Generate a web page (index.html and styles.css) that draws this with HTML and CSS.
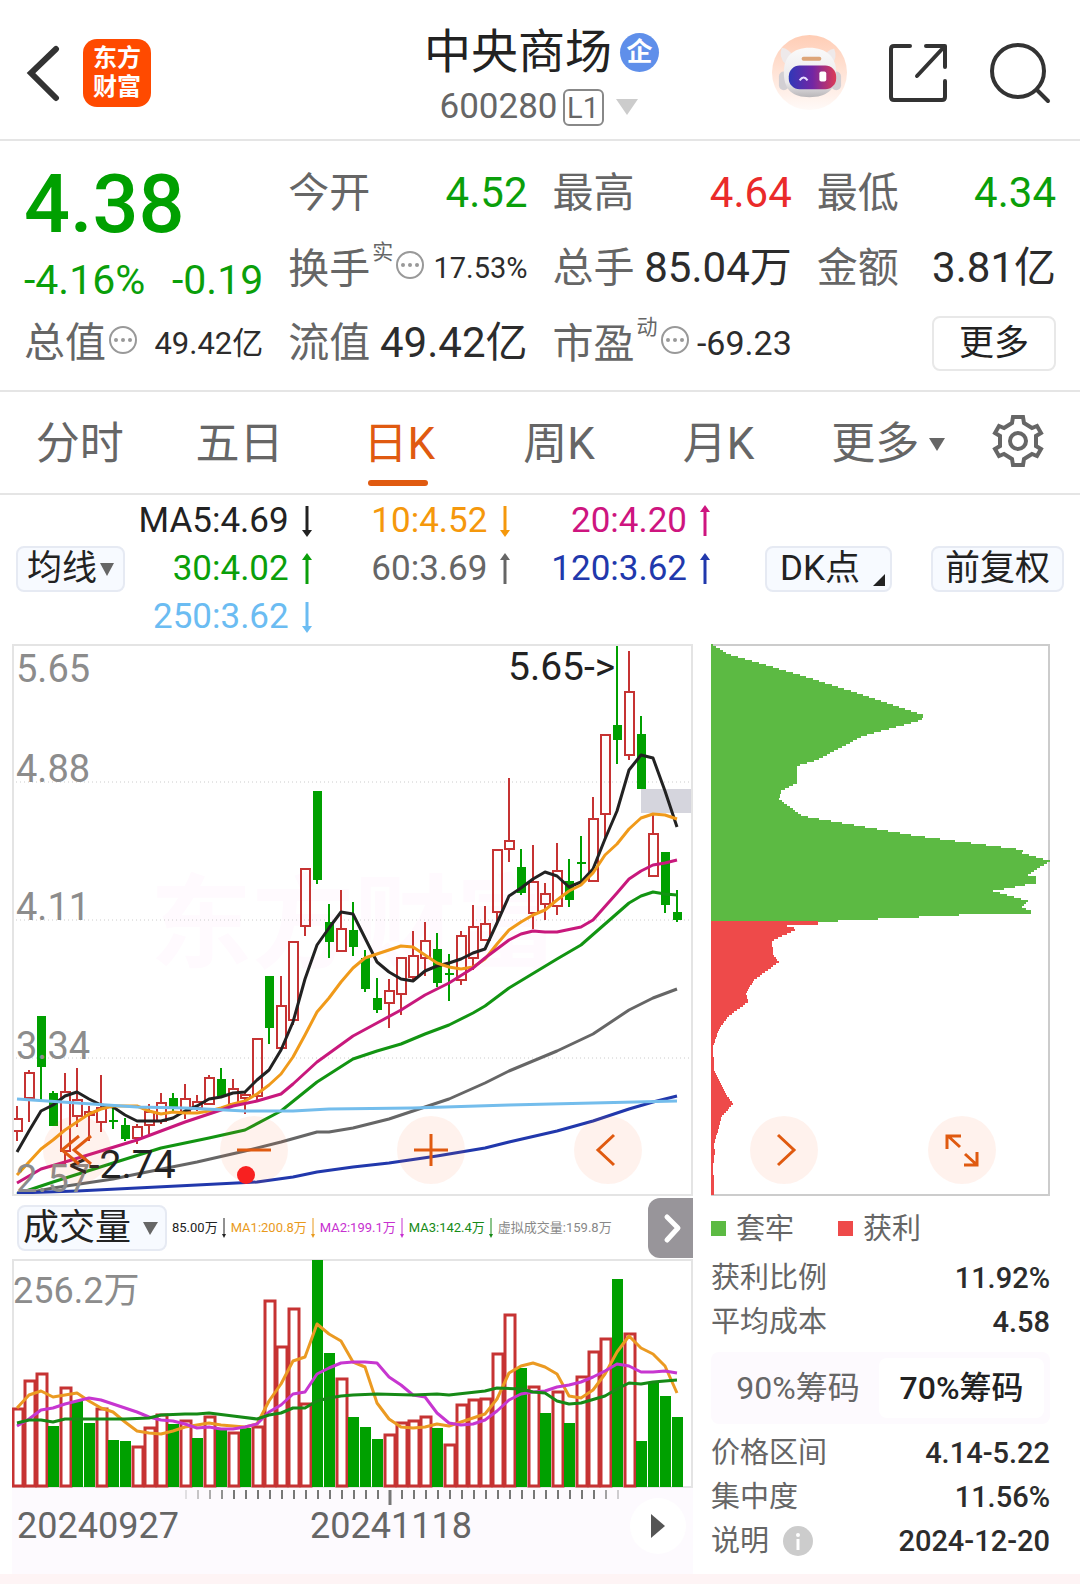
FILE: index.html
```html
<!DOCTYPE html>
<html lang="zh-CN">
<head>
<meta charset="utf-8">
<meta name="viewport" content="width=device-width, initial-scale=1">
<title>中央商场 600280</title>
<link rel="stylesheet" href="styles.css">
</head>
<body>
<header class="topbar">
  <div class="topbar-side">
    <button class="icon-btn" aria-label="返回"><svg width="34" height="58" viewBox="0 0 34 58"><path d="M30 5 5 29l25 25" fill="none" stroke="#333" stroke-width="6" stroke-linecap="round"/></svg></button>
    <div class="logo"><span>东方</span><span>财富</span></div>
  </div>
  <div class="title">
    <h1>中央商场 <span class="badge">企</span></h1>
    <button class="code">600280<span class="level">L1</span><svg width="22" height="16" viewBox="0 0 22 16"><path d="M0 0h22L11 16z" fill="#ccc"/></svg></button>
  </div>
  <div class="topbar-side end">
    <button class="icon-btn" aria-label="智能助手"><svg width="75" height="77" viewBox="0 0 76 78">
      <defs>
        <linearGradient id="halo" x1="0" y1="0" x2="0" y2="1"><stop offset="0" stop-color="#ffcdb5"/><stop offset="1" stop-color="#fffaf8"/></linearGradient>
        <linearGradient id="shell" x1="0" y1="0" x2="0" y2="1"><stop offset="0" stop-color="#fafafa"/><stop offset=".7" stop-color="#eae8ea"/><stop offset="1" stop-color="#b9b6b9"/></linearGradient>
        <linearGradient id="visor"><stop offset="0" stop-color="#2f38b8"/><stop offset=".5" stop-color="#7226a4"/><stop offset="1" stop-color="#dd3a55"/></linearGradient>
      </defs>
      <circle cx="38" cy="39" r="38" fill="url(#halo)"/>
      <path d="M10 14q7 1 11 8l-7 9q-8-8-4-17zM63 15q-7 1-10 8l7 9q7-8 3-17z" fill="#eee9ea"/>
      <rect x="7" y="38" width="10" height="19" rx="5" fill="#d2cfd3"/><rect x="60" y="38" width="10" height="19" rx="5" fill="#d2cfd3"/>
      <path d="M38 14c17 0 27 9 27 25 0 18-10 25-27 25S12 57 12 39c0-16 9-25 26-25z" fill="url(#shell)"/>
      <rect x="30" y="23" width="20" height="4" rx="2" fill="#dda578"/>
      <rect x="17" y="32" width="48" height="24" rx="11" fill="url(#visor)"/>
      <path d="M28 47q4-6 8 0" fill="none" stroke="#e8dcff" stroke-width="2"/><rect x="48" y="38" width="7" height="10" rx="2" fill="#fff"/>
    </svg></button>
    <button class="icon-btn" aria-label="分享"><svg width="60" height="60" viewBox="0 0 60 60" fill="none" stroke="#333" stroke-width="4" stroke-linecap="round" stroke-linejoin="round"><path d="M22 3H6Q3 3 3 6v48q0 3 3 3h48q3 0 3-3V38M38 3h19v21M56 4 29 33"/></svg></button>
    <button class="icon-btn" aria-label="搜索"><svg width="62" height="62" viewBox="0 0 62 62" fill="none" stroke="#333" stroke-width="4" stroke-linecap="round"><circle cx="29" cy="29" r="26"/><path d="m48 48 11 11"/></svg></button>
  </div>
</header>

<section class="quote">
  <div class="quote-col">
    <div class="price">4.38</div>
    <div class="change"><span>-4.16%</span><span>-0.19</span></div>
    <div class="cell"><span class="label">总值</span><svg class="more-dot" viewBox="0 0 30 30"><use href="#dots"/></svg><span class="value small">49.42亿</span></div>
  </div>
  <div class="quote-col">
    <div class="cell"><span class="label">今开</span><span class="value down">4.52</span></div>
    <div class="cell"><span class="label">换手<sup>实</sup></span><svg class="more-dot" viewBox="0 0 30 30"><use href="#dots"/></svg><span class="value tiny">17.53%</span></div>
    <div class="cell"><span class="label">流值</span><span class="value">49.42亿</span></div>
  </div>
  <div class="quote-col">
    <div class="cell"><span class="label">最高</span><span class="value up">4.64</span></div>
    <div class="cell"><span class="label">总手</span><span class="value">85.04万</span></div>
    <div class="cell"><span class="label">市盈<sup>动</sup></span><svg class="more-dot" viewBox="0 0 30 30"><use href="#dots"/></svg><span class="value medium">-69.23</span></div>
  </div>
  <div class="quote-col">
    <div class="cell"><span class="label">最低</span><span class="value down">4.34</span></div>
    <div class="cell"><span class="label">金额</span><span class="value">3.81亿</span></div>
    <div class="cell"><button class="more">更多</button></div>
  </div>
</section>

<nav class="tabs">
  <button>分时</button>
  <button>五日</button>
  <button class="active">日K</button>
  <button>周K</button>
  <button>月K</button>
  <button class="other">更多<svg width="16" height="13" viewBox="0 0 16 13"><path d="M0 0h16L8 13z" fill="#666"/></svg></button>
  <button class="gear" aria-label="设置"><svg width="56" height="56" viewBox="-28 -28 56 56" fill="none" stroke="#666" stroke-width="4"><path d="M-5-24H5L6-18 14-13 19-15 23-8 18-5V5L23 8 19 15 14 13 6 18 5 24H-5L-6 18-14 13-19 15-23 8-18 5V-5L-23-8-19-15-14-13-6-18Z"/><circle r="8"/></svg></button>
</nav>

<section class="averages">
  <button class="chip">均线<svg width="14" height="13" viewBox="0 0 14 13"><path d="M0 0h14L7 13z" fill="#666"/></svg></button>
  <div class="ma-grid">
    <span class="c5">MA5:4.69<svg class="arrow"><use href="#fall"/></svg></span>
    <span class="c10">10:4.52<svg class="arrow"><use href="#fall"/></svg></span>
    <span class="c20">20:4.20<svg class="arrow"><use href="#rise"/></svg></span>
    <span class="c30">30:4.02<svg class="arrow"><use href="#rise"/></svg></span>
    <span class="c60">60:3.69<svg class="arrow"><use href="#rise"/></svg></span>
    <span class="c120">120:3.62<svg class="arrow"><use href="#rise"/></svg></span>
    <span class="c250">250:3.62<svg class="arrow"><use href="#fall"/></svg></span>
  </div>
  <button class="chip dk">DK点<svg width="12" height="12" viewBox="0 0 12 12"><path d="M12 0v12H0z" fill="#222"/></svg></button>
  <button class="chip">前复权</button>
</section>

<main class="board">
  <section class="left">
    <div class="chart-wrap">
      <svg class="chart" id="kline" viewBox="0 0 681 552" role="img" aria-label="日K线图">
        <text class="watermark" x="138" y="316">东方财富</text>
        <g class="grid"><path d="M0 138h681M0 276h681M0 414h681"/></g>
        <rect x="629" y="145" width="52" height="24" fill="#d5d5dd"/>
        <g id="candles"></g>
        <g id="mas"></g>
        <g class="scale"><text x="4" y="38">5.65</text><text x="4" y="138">4.88</text><text x="4" y="276">4.11</text><text x="4" y="415">3.34</text><text x="4" y="548">2.57</text></g>
        <g class="marks"><text x="496" y="36">5.65-&gt;</text><text x="57" y="534">&lt;-2.74</text></g>
        <rect x="1" y="1" width="679" height="550" fill="none" stroke="#e4e4e4" stroke-width="2"/>
      </svg>
      <div class="controls">
        <button aria-label="最早"><svg viewBox="0 0 68 68"><path d="M36 20 19 34l17 14M48 20 31 34l17 14"/></svg></button>
        <button aria-label="缩小"><svg viewBox="0 0 68 68"><path d="M17 34h34"/></svg><i class="dot"></i></button>
        <button aria-label="放大"><svg viewBox="0 0 68 68"><path d="M17 34h34M34 18v32"/></svg></button>
        <button aria-label="左移"><svg viewBox="0 0 68 68"><path d="M40 19 24 34l16 15"/></svg></button>
      </div>
    </div>
    <div class="vol-head">
      <button class="chip">成交量<svg width="15" height="13" viewBox="0 0 15 13"><path d="M0 0h15L7 13z" fill="#666"/></svg></button>
      <p class="vol-values">
        <span class="c5">85.00万<svg><use href="#fall-s"/></svg></span>
        <span class="v1">MA1:200.8万<svg><use href="#fall-s"/></svg></span>
        <span class="v2">MA2:199.1万<svg><use href="#fall-s"/></svg></span>
        <span class="v3">MA3:142.4万<svg><use href="#fall-s"/></svg></span>
        <span class="v4">虚拟成交量:159.8万</span>
      </p>
      <button class="next" aria-label="下一个指标"><svg width="45" height="60" viewBox="0 0 45 60"><path d="m19 19 11 11-11 12" fill="none" stroke="#fff" stroke-width="5" stroke-linecap="round" stroke-linejoin="round"/></svg></button>
    </div>
    <svg class="chart" id="volume" viewBox="0 0 681 229" role="img" aria-label="成交量图">
      <g class="scale"><text x="1" y="44">256.2万</text></g>
      <rect x="1" y="1" width="679" height="227" fill="none" stroke="#e4e4e4" stroke-width="2"/>
      <g id="bars"></g>
      <g id="vmas"></g>
    </svg>
    <div class="axis">
      <svg class="ticks" id="ticks" viewBox="0 0 681 18"></svg>
      <div class="dates"><time>20240927</time><time>20241118</time><button aria-label="播放"><svg width="14" height="24" viewBox="0 0 14 24"><path d="M0 0l14 12L0 24z" fill="#555"/></svg></button></div>
    </div>
  </section>

  <aside class="right">
    <div class="chart-wrap">
      <svg class="chart" viewBox="0 0 339 552" role="img" aria-label="筹码分布">
        <path d="M0 1H338V551H0" fill="none" stroke="#ccc" stroke-width="2"/>
        <path id="trapped" fill="#5cba43"/>
        <path id="profit" fill="#ee4a4a"/>
      </svg>
      <div class="controls">
        <button aria-label="右移"><svg viewBox="0 0 68 68"><path d="m28 19 16 15-16 15"/></svg></button>
        <button aria-label="全屏"><svg viewBox="0 0 68 68"><path d="M19 33V20h14M20 20l12 11M37 38l12 11M36 49h13V36"/></svg></button>
      </div>
    </div>
    <div class="legend"><span class="trapped">套牢</span><span class="profit">获利</span></div>
    <dl class="stats">
      <div><dt>获利比例</dt><dd>11.92%</dd></div>
      <div><dt>平均成本</dt><dd>4.58</dd></div>
    </dl>
    <div class="switch"><button>90%筹码</button><button class="active">70%筹码</button></div>
    <dl class="stats">
      <div><dt>价格区间</dt><dd>4.14-5.22</dd></div>
      <div><dt>集中度</dt><dd>11.56%</dd></div>
      <div><dt>说明<svg width="30" height="30" viewBox="0 0 30 30"><circle cx="15" cy="15" r="15" fill="#ccc"/><circle cx="15" cy="9" r="2" fill="#fff"/><path d="M15 13v11" stroke="#fff" stroke-width="3"/></svg></dt><dd>2024-12-20</dd></div>
    </dl>
  </aside>
</main>
<div class="strip"></div>

<svg width="0" height="0" class="symbols">
  <symbol id="dots" viewBox="0 0 30 30"><circle cx="15" cy="15" r="13" fill="none" stroke="#999" stroke-width="2"/><circle cx="8" cy="15" r="2" fill="#999"/><circle cx="15" cy="15" r="2" fill="#999"/><circle cx="22" cy="15" r="2" fill="#999"/></symbol>
  <symbol id="fall" viewBox="0 0 12 32"><path d="M6 1v27" stroke="currentColor" stroke-width="3"/><path d="M1 25h10l-5 7z" fill="currentColor"/></symbol>
  <symbol id="rise" viewBox="0 0 12 32"><path d="M6 4v27" stroke="currentColor" stroke-width="3"/><path d="M1 7h10L6 0z" fill="currentColor"/></symbol>
  <symbol id="fall-s" viewBox="0 0 4 20"><path d="M2 0v18" stroke="currentColor"/><path d="M0 16h4l-2 4z" fill="currentColor"/></symbol>
</svg>
<script src="charts.js"></script>
</body>
</html>
```
FILE: styles.css
```css
* { box-sizing: border-box; }
body { margin: 0; background: #fff; color: #222; font-family: Roboto, "Noto Sans CJK SC", sans-serif; line-height: 1.2; }
button { font: inherit; color: inherit; background: none; border: 0; padding: 0; cursor: pointer; }
svg { display: block; flex: none; }
h1, p, dl, dd { margin: 0; font-weight: 400; }
.symbols { position: absolute; }

.topbar { display: flex; align-items: center; justify-content: space-between; height: 141px; padding: 6px 29px 0 26px; border-bottom: 2px solid #e5e5e5; }
.topbar-side { display: flex; align-items: center; gap: 23px; flex: 1; }
.topbar-side.end { justify-content: flex-end; gap: 41px; }
.logo { width: 68px; height: 68px; border-radius: 14px; background: #ff4a00; color: #fff; font-size: 24px; font-weight: 700; line-height: 29px; display: flex; flex-direction: column; align-items: center; justify-content: center; }
.title { display: flex; flex-direction: column; align-items: center; padding-top: 9px; }
.title h1 { display: flex; align-items: center; gap: 8px; padding-left: 6px; font-size: 47px; line-height: 60px; }
.badge { width: 39px; height: 39px; border-radius: 50%; background: #5f8fea; color: #fff; font-size: 26px; font-weight: 700; line-height: 39px; text-align: center; }
.code { display: flex; align-items: center; gap: 5px; font-size: 35px; line-height: 50px; color: #666; }
.code svg { margin-left: 7px; }
.level { width: 41px; height: 37px; border: 2px solid #888; border-radius: 6px; font-size: 29px; line-height: 34px; text-align: center; }

.quote { display: grid; grid-template-columns: repeat(4, 1fr); gap: 25px; padding: 15px 24px 9px; border-bottom: 2px solid #e5e5e5; }
.price { height: 98px; line-height: 98px; font-size: 81px; font-weight: 500; color: #00a000; }
.change { display: flex; justify-content: space-between; height: 52px; line-height: 52px; font-size: 41px; color: #0a9f0a; }
.cell { display: flex; align-items: center; height: 75px; }
.label { font-size: 41px; color: #666; white-space: nowrap; }
.label sup { margin-left: 2px; font-size: 21px; line-height: 21px; vertical-align: 24px; }
.more-dot { width: 30px; height: 30px; margin: -7px 0 0 2px; }
.value { margin-left: auto; font-size: 42px; white-space: nowrap; color: #2c2c2c; }
.value.medium { font-size: 34px; }
.value.small { font-size: 31px; }
.value.tiny { font-size: 29px; }
.value.down { color: #0a9f0a; }
.value.up { color: #ea2a2a; }
.more { width: 124px; height: 55px; margin-left: auto; border: 2px solid #e8e8e8; border-radius: 8px; font-size: 35px; }

.tabs { display: grid; grid-template-columns: repeat(6, 4fr) 3fr; height: 103px; padding-right: 2px; border-bottom: 2px solid #e5e5e5; }
.tabs button { position: relative; display: flex; align-items: center; justify-content: center; gap: 10px; padding-top: 3px; font-size: 44px; color: #666; }
.tabs .other { padding-left: 20px; }
.tabs .gear { padding: 0 0 3px; }
.tabs .active { color: #e05a10; }
.tabs .active::after { content: ""; position: absolute; bottom: 7px; left: 50%; width: 60px; height: 6px; margin-left: -31px; border-radius: 3px; background: #e05a10; }

.averages { display: flex; align-items: center; padding: 2px 16px 3px; }
.chip { display: flex; align-items: center; gap: 3px; height: 46px; padding: 0 9px; border: 2px solid #e6eaf3; border-radius: 8px; background: #f7faff; font-size: 35px; white-space: nowrap; }
.averages .chip:last-child { padding: 0 12px; margin-left: 39px; }
.averages .dk { gap: 13px; padding: 0 5px 0 13px; }
.dk svg { margin-top: 22px; }
.ma-grid { flex: 1; display: grid; grid-template-columns: 188fr 199fr 200fr; margin-right: 54px; font-size: 35px; line-height: 48px; }
.ma-grid span { display: flex; align-items: center; justify-content: flex-end; gap: 12px; }
.arrow { width: 12px; height: 32px; }
.c5 { color: #222; } .c10 { color: #f5980c; } .c20 { color: #ce157f; } .c30 { color: #0a9f0a; }
.c60 { color: #666; } .c120 { color: #2138ac; } .c250 { color: #6bbcf2; }

.board { display: grid; grid-template-columns: 681fr 339fr; gap: 18px; padding: 0 30px 0 12px; }
.chart-wrap { position: relative; }
.chart { width: 100%; height: auto; }
.watermark { font-size: 102px; font-weight: 700; fill: #fffafe; }
.grid { stroke: #ccc; stroke-dasharray: 1 3; }
.scale { font-size: 38px; fill: #8c8c8c; }
#volume .scale { font-size: 36px; }
.marks { font-size: 39px; fill: #222; }
.controls { position: absolute; bottom: 12px; left: 31px; right: 51px; display: flex; justify-content: space-between; }
.right .controls { left: 39px; right: 54px; }
.controls button { position: relative; width: 68px; height: 68px; border-radius: 50%; background: rgba(250, 110, 60, .09); }
.controls path { fill: none; stroke: #e05a10; stroke-width: 3; }
.dot { position: absolute; left: 17px; top: 50px; width: 18px; height: 18px; border-radius: 50%; background: #f82020; }

.vol-head { display: flex; align-items: center; height: 63px; padding-left: 5px; }
.vol-head .chip { width: 150px; padding: 2px 7px 0 4px; font-size: 36px; justify-content: space-between; }
.vol-values { display: flex; gap: 5px; margin-left: 5px; font-size: 13px; white-space: nowrap; }
.vol-values span { display: flex; align-items: center; gap: 4px; }
.vol-values svg { width: 4px; height: 20px; }
.v1 { color: #e99a1c; } .v2 { color: #c730d0; } .v3 { color: #168a16; } .v4 { color: #888; }
.next { margin-left: auto; border-radius: 12px 0 0 12px; background: #98959a; }
.axis { height: 86px; background: #fdfafe; }
.ticks { width: 100%; height: auto; }
.dates { display: grid; grid-template-columns: 293fr 320fr 63fr; align-items: center; padding-left: 5px; font-size: 36px; line-height: 40px; color: #666; }
.dates button { width: 56px; height: 56px; margin: -8px 0; border-radius: 50%; background: #fff; display: flex; align-items: center; justify-content: center; }

.legend { display: flex; gap: 44px; padding-top: 6px; height: 60px; align-items: center; font-size: 29px; color: #666; }
.legend span { display: flex; align-items: center; gap: 10px; }
.legend span::before { content: ""; width: 15px; height: 15px; background: #5cba43; }
.legend .profit::before { background: #ee4a4a; }
.stats div { display: flex; justify-content: space-between; align-items: center; height: 44px; font-size: 29px; }
.stats dt { display: flex; align-items: center; gap: 14px; color: #666; }
.stats dd { font-size: 29px; font-weight: 500; color: #2c2c2c; }
.switch { display: grid; grid-template-columns: 162fr 165fr; height: 72px; margin: 8px 0 7px; padding: 6px; border-radius: 8px; background: #fdfafe; font-size: 32px; color: #666; }
.switch button { border-radius: 8px; }
.switch .active { background: #fff; color: #222; font-weight: 500; }
.strip { height: 10px; background: #fef4f5; }
```
FILE: charts.js
```js
const STEP = 12, X0 = 5;
const px = i => X0 + STEP * i;
const RED = '#c63333', GREEN = '#00a000';

// One entry per day: direction, high, body top, body bottom, low.
const days = `r 462 475 487 497|r 426 429 454 478|g 372 372 423 456|g 447 449 482 482|r 429 448 507 522|r 424 456 472 483|r 462 468 471 497|r 431 464 478 488
g 464 476 478 485|g 474 481 495 497|r 480 483 494 500|r 460 468 481 490|r 449 459 477 480|g 449 454 463 467|r 440 455 468 475|r 451 458 464 467
r 431 434 460 461|g 424 435 452 454|r 435 445 460 460|r 448 451 454 470|r 395 395 452 457|g 332 332 384 400|r 332 362 404 404|r 298 298 376 381
r 225 225 282 292|g 147 147 236 240|g 260 278 298 314|r 246 285 307 307|g 258 286 303 312|g 306 314 345 348|g 334 354 366 369|r 335 347 359 384
r 314 314 350 371|r 287 312 333 337|r 278 297 314 332|g 289 305 339 343|g 310 329 331 357|r 287 292 336 341|r 261 283 314 326|r 262 280 296 296
r 206 206 268 277|r 134 197 205 218|g 205 223 249 251|r 201 238 269 285|r 239 250 260 276|r 199 227 262 271|g 215 237 256 263|g 192 218 220 238
r 153 175 237 237|r 91 91 170 194|g 0 81 96 120|r 7 48 111 116|g 72 90 145 145|r 171 190 232 232|g 208 208 261 269|g 246 268 276 278`
  .split(/[|\n]/).map(d => d.trim().split(' '));

document.getElementById('candles').innerHTML = days.map(([c, h, t, b, l], i) => {
  const x = px(i);
  if (c === 'g') return `<path d="M${x} ${h}V${l}" stroke="${GREEN}" stroke-width="2"/><rect x="${x - 4}" y="${t}" width="9" height="${b - t}" fill="${GREEN}"/>`;
  return `<path d="M${x} ${h}V${t}M${x} ${b}V${l}" stroke="${RED}" stroke-width="2"/><rect x="${x - 4}" y="${t}" width="9" height="${b - t}" fill="none" stroke="${RED}" stroke-width="2"/>`;
}).join('');

const every = ys => ys.map((y, i) => [i, y]);
const pairs = s => s.split(' ').map(p => p.split(',').map(Number));
const line = (pts, color, fy = y => y) =>
  `<polyline fill="none" stroke="${color}" stroke-width="3" stroke-linejoin="round" points="${pts.map(([i, y]) => px(i) + ',' + fy(y)).join(' ')}"/>`;

document.getElementById('mas').innerHTML = [
  line(every([508,487,467,461,452,448,455,461,463,471,477,477,477,474,467,462,455,453,449,448,436,426,406,378,335,301,284,268,270,294,318,328,335,337,327,322,319,315,309,305,279,252,244,235,228,232,243,238,225,195,167,126,111,114,147,183]), '#222'),
  line(every([531,518,505,496,486,478,470,465,462,462,462,467,470,468,469,469,467,464,460,457,450,441,430,413,391,368,354,338,324,314,310,306,302,303,311,319,323,325,323,315,300,286,278,271,266,256,247,241,229,211,200,185,174,170,171,175]), '#f09a1a'),
  line(pairs('0,539 2,525 4,518 7,507 10,496 14,478 18,462 20,457 22,450 23,440 25,418 28,392 30,379 32,366 34,351 36,339 38,324 39,314 41,296 42,290 43,287 44,288 45,288 47,283 48,276 50,249 51,235 52,227 53,221 54,219 55,216'), '#c8187c'),
  line(pairs('0,550 3,538 8,519 12,504 16,494 19,486 22,467 25,438 28,415 30,407 32,400 34,390 36,381 38,369 39,362 41,344 45,315 47,301 49,280 51,259 52,252 53,248 54,250 55,251'), '#129412'),
  line(pairs('0,551 3,544 8,535 10,530 15,518 19,507 22,498 25,488 26,488 28,484 31,475 33,467 36,455 39,439 41,427 45,407 48,390 51,366 53,354 55,345'), '#666'),
  line(pairs('0,549 5,547 10,544 15,541 20,538 23,533 25,528 28,523 31,519 35,512 39,504 41,498 45,487 48,477 51,465 53,458 55,452'), '#2138ac'),
  line(pairs('0,455 5,459 10,463 14,464 19,467 23,467 26,465 33,464 41,461 48,459 55,457'), '#74bdec')
].join('');

// Volume heights are relative to a full scale of 680.
const FULL = 680, BASE = 228;
const vy = v => BASE - Math.round(v * 227 / FULL);
const volumes = [236,320,340,183,300,258,193,237,140,138,122,180,218,189,201,146,212,178,165,178,183,561,421,535,251,680,400,326,211,179,143,160,194,201,212,177,130,249,263,268,402,519,356,304,221,288,191,334,406,445,624,460,137,316,272,209];
const falls = new Set([3,5,6,8,9,13,15,17,19,25,26,28,29,30,35,42,44,46,50,52,53,54,55]);
document.getElementById('bars').innerHTML = volumes.map((v, i) => {
  const x = px(i), y = vy(v);
  return falls.has(i)
    ? `<rect x="${x - 5}" y="${y}" width="11" height="${BASE - y}" fill="${GREEN}"/>`
    : `<rect x="${x - 4}" y="${y + 1}" width="10" height="${BASE - y - 2}" fill="#fff" stroke="${RED}" stroke-width="3"/>`;
}).join('');
const fromTop = y => vy(893 - y);
document.getElementById('vmas').innerHTML = [
  line(every([657,617,606,622,617,611,636,655,668,698,726,730,733,725,713,706,701,707,710,712,705,635,585,515,503,406,436,457,518,535,640,690,714,717,712,705,709,697,686,675,630,553,531,523,534,555,620,625,603,555,490,441,478,495,530,610]), '#eb9a22', fromTop),
  line(every([709,690,663,656,643,634,627,631,643,656,669,683,693,694,705,717,714,720,718,714,704,667,647,613,607,555,537,523,518,518,523,562,587,617,623,672,700,707,704,692,666,632,614,608,604,594,587,578,564,545,524,530,550,550,546,551]), '#c736d0', fromTop),
  line(pairs('0,702 1,692 2,692 3,697 4,690 5,688 7,689 9,690 11,686 12,678 14,674 15,675 16,671 18,681 20,688 21,676 22,671 23,655 24,656 25,635 26,625 27,620 28,617 30,614 33,617 35,613 36,617 39,606 40,595 42,598 43,607 44,612 45,634 46,643 47,642 49,620 50,600 51,580 52,583 53,577 54,574 55,573'), '#168a16', fromTop)
].join('');

let ticks = '';
for (let x = 174; x <= 606; x += STEP) {
  const long = x === 378;
  const edge = Math.min((x - 162) / 60, (618 - x) / 36, 1);
  ticks += `<path d="M${x} 2V${long ? 17 : 11}" stroke="#777" stroke-width="${long ? 3 : 2}" opacity="${edge}"/>`;
}
document.getElementById('ticks').innerHTML = ticks;

// Chip distribution: outline points (width, y) filled in as 2px rows.
function rows(outline) {
  const pts = pairs(outline);
  let d = '';
  for (let k = 0, y = pts[0][1]; y < pts[pts.length - 1][1]; y += 2) {
    while (k < pts.length - 2 && pts[k + 1][1] <= y) k++;
    const [x1, y1] = pts[k], [x2, y2] = pts[k + 1];
    const w = Math.round(x1 + (x2 - x1) * (y - y1) / (y2 - y1));
    d += `M0 ${y}h${w}v2H0z`;
  }
  return d;
}
document.getElementById('trapped').setAttribute('d', rows('2,0 17,9 89,30 149,49 212,70 211,75 152,91 106,115 86,121 86,138 70,146 68,154 91,171 206,191 313,205 311,208 339,216 315,231 325,232 325,238 282,246 317,256 310,263 320,265 320,268 268,269 107,277'));
document.getElementById('profit').setAttribute('d', rows('107,277 107,279 73,280 86,284 61,296 62,310 68,317 43,335 35,348 37,357 18,371 8,384 2,402 3,424 13,446 22,459 11,471 3,500 4,507 2,522 3,540 3,551'));
```
